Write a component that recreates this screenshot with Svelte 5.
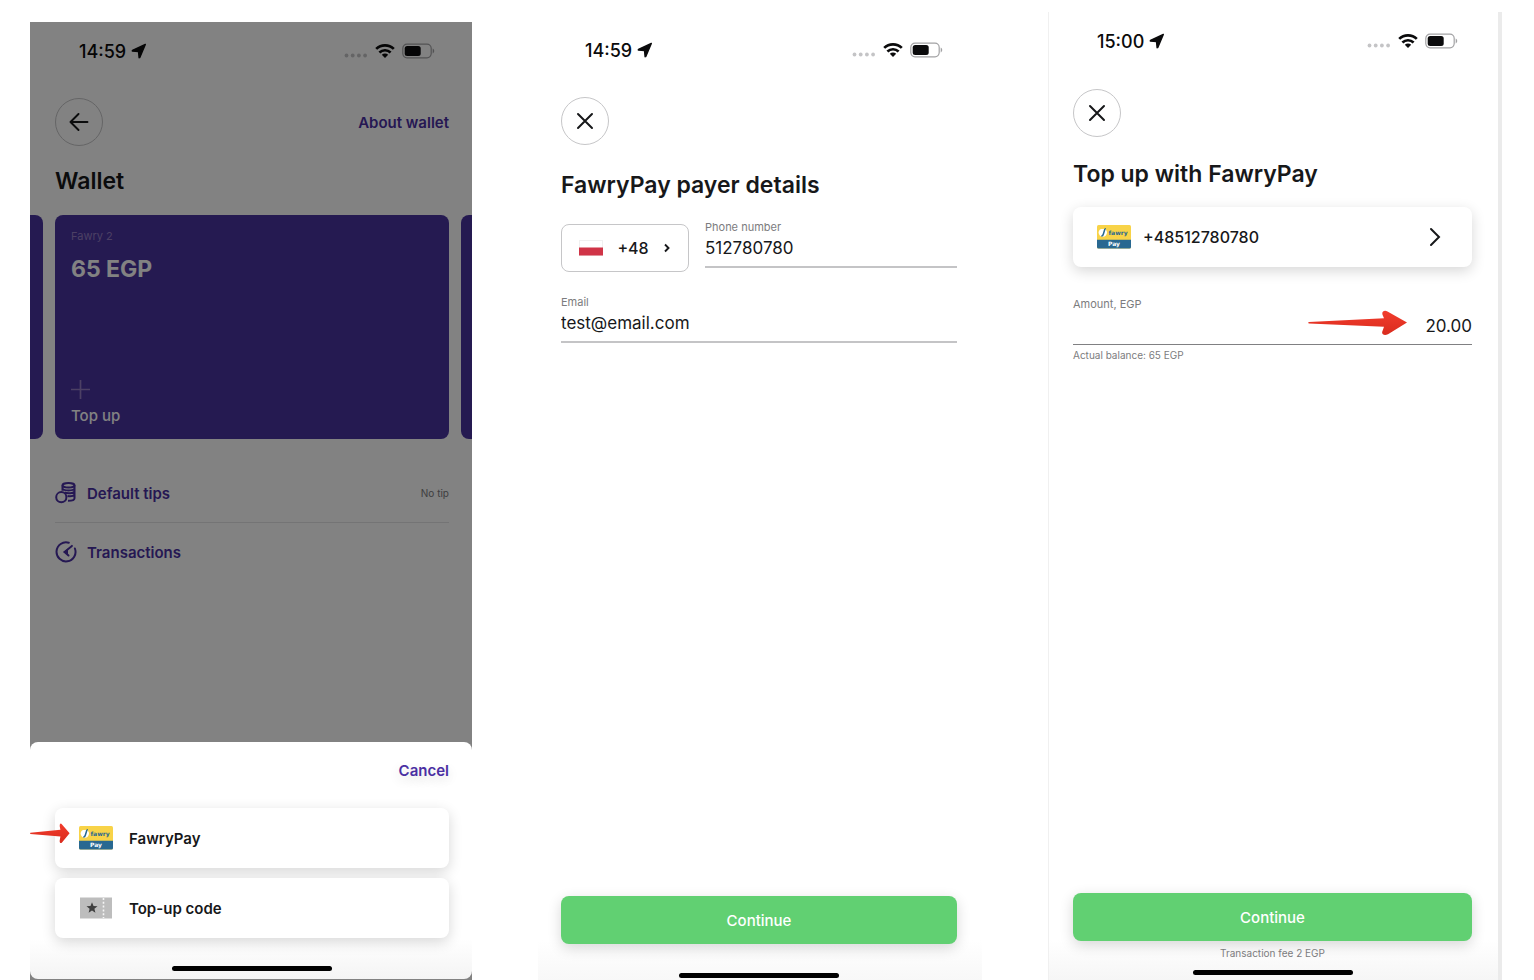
<script lang="ts">
  let phone = $state('512780780')
  let email = $state('test@email.com')
  let amount = $state('20.00')
</script>

{#snippet statusBar(time: string)}
  <div class="status">
    <span class="time">{time}</span>
    <svg class="location" width="16" height="16" viewBox="0 0 16 16" aria-hidden="true">
      <path d="M14.300 1.500 1.500 7.300l-.2.700 6.200.5.600 6.200.7-.2Z" fill="currentColor" stroke="currentColor" stroke-width="1.400" stroke-linejoin="round" />
    </svg>
    <svg class="dots" width="24" height="18" viewBox="0 0 24 18" aria-hidden="true">
      {#each [2.5, 8.7, 14.9, 21.1] as cx}
        <circle {cx} cy="13.500" r="1.900" fill="#c4c4c6" />
      {/each}
    </svg>
    <svg width="20" height="16" viewBox="0 0 20 16" aria-hidden="true">
      <g fill="none" stroke="currentColor" stroke-width="2.700">
        <path d="M1.200 5.900C6 1.200 14 1.200 18.800 5.900" />
        <path d="M4.400 9.500c3.200-3 8-3 11.200 0" />
      </g>
      <path d="m10 14.900-3.200-3.100c1.800-1.600 4.600-1.600 6.400 0Z" fill="currentColor" />
    </svg>
    <svg class="battery" width="33" height="16" viewBox="0 0 33 16" aria-hidden="true">
      <rect x=".8" y="1.200" width="28.400" height="13.600" rx="4.200" fill="none" stroke="#a2a2a4" stroke-width="1.200" />
      <rect x="2.700" y="3.100" width="16" height="9.800" rx="2.500" fill="currentColor" />
      <path d="M30.700 5.600c2 .7 2 4.100 0 4.800Z" fill="#a2a2a4" />
    </svg>
  </div>
{/snippet}

{#snippet closeIcon()}
  <svg width="18" height="18" viewBox="0 0 18 18" aria-hidden="true">
    <path d="m2 2 14 14M16 2 2 16" fill="none" stroke="currentColor" stroke-width="2" stroke-linecap="round" />
  </svg>
{/snippet}

{#snippet fawryLogo()}
  <svg class="logo" width="34" height="24" viewBox="0 0 34 24" aria-hidden="true">
    <rect width="34" height="23.500" rx="1.500" fill="#f8d348" />
    <path d="M0 14.800h34V22a1.500 1.500 0 0 1-1.500 1.500h-31A1.500 1.500 0 0 1 0 22Z" fill="#286891" />
    <circle cx="5.800" cy="7.600" r="4.200" fill="#fff" />
    <path d="M8.300 2.800 6.300 9.300c-.3 1.200-.9 1.700-2 1.600" fill="none" stroke="#286891" stroke-width="1.500" />
    <path d="M3.600 3.300c2 .4 3.600 0 5.500-1.300" fill="none" stroke="#f8d348" stroke-width="1.200" />
    <text x="11.500" y="9.500" class="logo-name">fawry</text>
    <text x="17" y="21" text-anchor="middle" class="logo-pay">Pay</text>
  </svg>
{/snippet}

{#snippet redArrow()}
  <svg class="pointer" viewBox="0 0 100 28" preserveAspectRatio="none" aria-hidden="true">
    <defs>
      <linearGradient id="arrow-fill" x1="0" y1="0" x2="0" y2="1">
        <stop offset="0" stop-color="#f23c2c" />
        <stop offset="1" stop-color="#d92c1e" />
      </linearGradient>
    </defs>
    <path d="M1 13 76 9l-1.500-4c-1-3.500 2-5.500 5-3.500L99 13.500 80 26c-4 2.200-7-.3-5.500-3.500L76 18 1 14.500c-1 0-1-1.400 0-1.500Z" fill="url(#arrow-fill)" />
  </svg>
{/snippet}

<main>
  <section class="screen wallet">
    {@render statusBar('14:59')}
    <header>
      <button class="round" aria-label="Back">
        <svg width="20" height="18" viewBox="0 0 20 18" aria-hidden="true">
          <path d="M18.500 9H1.500M9.500 1 1.500 9l8 8" fill="none" stroke="currentColor" stroke-width="1.900" stroke-linecap="round" stroke-linejoin="round" />
        </svg>
      </button>
      <a href="#about">About wallet</a>
    </header>
    <h1>Wallet</h1>

    <div class="carousel">
      <div class="peek left"></div>
      <article class="account">
        <span class="account-name">Fawry 2</span>
        <strong>65 EGP</strong>
        <button class="top-up">
          <svg width="19" height="19" viewBox="0 0 19 19" aria-hidden="true">
            <path d="M9.500 0v19M0 9.500h19" stroke="#957fc4" stroke-width="1.700" />
          </svg>
          Top up
        </button>
      </article>
      <div class="peek right"></div>
    </div>

    <nav>
      <a href="#tips">
        <svg width="22" height="22" viewBox="0 0 22 22" aria-hidden="true">
          <g fill="none" stroke="currentColor" stroke-width="2">
            <ellipse cx="13.500" cy="3.300" rx="6" ry="2.200" />
            <path d="M7.500 3.300v5.500M19.500 3.300v13c0 1.500-2.500 2.500-6.500 2.500M7.500 6.500c1 2.500 11 2.500 12 0M9.500 10.300c3 1.500 9 1 10-.7M12.500 14c3 .5 6 0 7-1.400" />
            <circle cx="6.300" cy="15.200" r="5.100" />
          </g>
        </svg>
        Default tips
        <small>No tip</small>
      </a>
      <a href="#transactions">
        <svg width="22" height="22" viewBox="0 0 22 22" aria-hidden="true">
          <g fill="none" stroke="currentColor" stroke-width="2" stroke-linecap="round">
            <path d="M13.800 1.800A9.500 9.500 0 1 0 19.900 7.500" />
            <path d="M16.900 4.900 9.500 11l4 3.500" />
          </g>
          <path d="m8.500 11 4.500-3.500v6.500Z" fill="currentColor" />
        </svg>
        Transactions
      </a>
    </nav>

    <div class="backdrop"></div>
    <div class="sheet" role="dialog" aria-label="Top up method">
      <button class="cancel">Cancel</button>
      <div class="method">
        <button class="card">
          {@render fawryLogo()}
          FawryPay
        </button>
        {@render redArrow()}
      </div>
      <div class="method">
        <button class="card">
          <svg class="logo" width="34" height="22" viewBox="0 0 34 22" aria-hidden="true">
            <rect x="1" y=".5" width="32" height="21" fill="#bdbdbd" />
            <path d="M24.500 1v20" stroke="#f5f5f5" stroke-width="1.600" stroke-dasharray="2 1.800" />
            <path d="m13 5.300 1.500 3.700 4 .3-3.100 2.500 1 3.900-3.400-2.100-3.400 2.100 1-3.900-3.100-2.500 4-.3Z" fill="#3f3f3f" />
          </svg>
          Top-up code
        </button>
      </div>
      <div class="home"></div>
    </div>
  </section>

  <section class="screen payer">
    {@render statusBar('14:59')}
    <header>
      <button class="round" aria-label="Close">{@render closeIcon()}</button>
    </header>
    <h1>FawryPay payer details</h1>

    <div class="phone-row">
      <button class="country" aria-label="Country code +48">
        <svg width="24" height="16" viewBox="0 0 24 16" aria-hidden="true">
          <rect x=".5" y=".5" width="23" height="15" fill="#fff" stroke="#f0f0f0" />
          <rect y="7.500" width="24" height="8" fill="#d03447" />
        </svg>
        +48
        <svg width="8" height="10" viewBox="0 0 8 10" aria-hidden="true">
          <path d="m2 1.500 3.500 3.500L2 8.500" fill="none" stroke="currentColor" stroke-width="1.900" />
        </svg>
      </button>
      <div class="field">
        <label for="phone">Phone number</label>
        <input id="phone" type="tel" bind:value={phone} />
      </div>
    </div>
    <div class="field">
      <label for="email">Email</label>
      <input id="email" type="email" bind:value={email} />
    </div>

    <footer>
      <button class="continue">Continue</button>
      <div class="home"></div>
    </footer>
  </section>

  <section class="screen amount">
    {@render statusBar('15:00')}
    <header>
      <button class="round" aria-label="Close">{@render closeIcon()}</button>
    </header>
    <h1>Top up with FawryPay</h1>

    <button class="card account-card">
      {@render fawryLogo()}
      +48512780780
      <svg class="chevron" width="12" height="20" viewBox="0 0 12 20" aria-hidden="true">
        <path d="m2 2 8 8-8 8" fill="none" stroke="currentColor" stroke-width="2" stroke-linecap="round" />
      </svg>
    </button>
    <div class="field">
      <label for="amount">Amount, EGP</label>
      <input id="amount" inputmode="decimal" bind:value={amount} />
      {@render redArrow()}
      <span class="hint">Actual balance: 65 EGP</span>
    </div>

    <footer>
      <button class="continue">Continue</button>
      <span class="fee">Transaction fee 2 EGP</span>
      <div class="home"></div>
    </footer>
  </section>
</main>

<style>
  :global(body) {
    margin: 0;
    background: #fff;
  }
  main {
    --purple: #4a2fa3;
    --ink: #17181a;
    --muted: #7c7c7e;
    display: grid;
    grid-template-columns: 442fr 444fr 454fr;
    gap: 66px;
    min-height: 100vh;
    padding: 0 32px 0 30px;
    box-sizing: border-box;
    font-family: Inter, 'Liberation Sans', sans-serif;
    color: var(--ink);
  }
  button,
  input {
    font: inherit;
    color: inherit;
    margin: 0;
    padding: 0;
    border: 0;
    background: none;
  }
  button {
    cursor: pointer;
  }
  a {
    color: var(--purple);
    text-decoration: none;
  }
  svg {
    display: block;
    flex-shrink: 0;
  }
  .screen {
    position: relative;
    display: flex;
    flex-direction: column;
    box-sizing: border-box;
    min-width: 0;
  }
  .wallet {
    margin-top: 22px;
    padding: 0 23px 0 25px;
    overflow: hidden;
  }
  .payer {
    margin-top: 21px;
    padding: 0 25px 0 23px;
    background: linear-gradient(to top, #f8f8f8, #fff 40px);
  }
  .amount {
    margin-top: 12px;
    padding: 0 26px 0 24px;
    border-left: 1px solid #f0f0f0;
    border-right: 4px solid #ebebeb;
    background: linear-gradient(to top, #f6f6f6, #fff 40px);
  }

  /* status bar */
  .status {
    display: flex;
    align-items: center;
    height: 58px;
    padding: 0 14px 0 24px;
    color: #0b0b0c;
  }
  .time {
    font-size: 18px;
    font-weight: 500;
  }
  .location {
    margin-left: 5px;
  }
  .dots {
    margin-left: auto;
    margin-right: 7px;
  }
  .battery {
    margin-left: 7px;
  }

  header {
    display: flex;
    align-items: center;
    justify-content: space-between;
    margin-top: 18px;
    font-size: 15px;
    font-weight: 600;
  }
  .amount header {
    margin-top: 19px;
  }
  .round {
    display: flex;
    align-items: center;
    justify-content: center;
    width: 48px;
    height: 48px;
    box-sizing: border-box;
    border: 1px solid #c6c6c8;
    border-radius: 50%;
  }
  h1 {
    margin: 24px 0 19px;
    font-size: 23px;
    line-height: 32px;
    font-weight: 600;
  }
  .wallet h1 {
    margin: 19px 0 18px;
  }
  .amount h1 {
    margin: 21px 0 17px;
  }

  /* wallet */
  .carousel {
    display: flex;
    gap: 12px;
    margin: 0 -23px 0 -25px;
    height: 224px;
  }
  .peek {
    background: #4933a0;
  }
  .peek.left {
    width: 13px;
    border-radius: 0 8px 8px 0;
  }
  .peek.right {
    width: 11px;
    border-radius: 8px 0 0 8px;
  }
  .account {
    flex: 1;
    display: flex;
    flex-direction: column;
    align-items: flex-start;
    padding: 14px 16px 13px;
    border-radius: 8px;
    background: #4933a0;
    color: #fff;
  }
  .account-name {
    font-size: 11px;
    line-height: 14px;
    color: #957fc4;
  }
  .account strong {
    margin-top: 10px;
    font-size: 23px;
    line-height: 32px;
    font-weight: 700;
  }
  .top-up {
    display: flex;
    flex-direction: column;
    align-items: flex-start;
    gap: 7px;
    margin-top: auto;
    font-size: 15px;
    line-height: 20px;
    font-weight: 500;
  }
  nav {
    margin-top: 25px;
  }
  nav a {
    display: flex;
    align-items: center;
    gap: 10px;
    height: 58px;
    font-size: 15px;
    font-weight: 600;
  }
  nav a + a {
    border-top: 1px solid #e4e4e6;
  }
  small {
    margin-left: auto;
    font-size: 10px;
    font-weight: 400;
    color: var(--muted);
  }
  .backdrop {
    position: absolute;
    inset: 0;
    background: rgba(0, 0, 0, 0.49);
  }
  .sheet {
    position: relative;
    display: flex;
    flex-direction: column;
    margin: auto -23px 1px -25px;
    padding: 18px 23px 8px 25px;
    border-radius: 8px;
    background: linear-gradient(to top, #f4f4f4, #fff 40px);
  }
  .cancel {
    align-self: flex-end;
    margin-bottom: 26px;
    font-size: 15px;
    line-height: 22px;
    font-weight: 600;
    color: var(--purple);
    text-shadow: 0 4px 12px rgba(0, 0, 0, 0.16);
  }
  .method {
    position: relative;
    margin-bottom: 10px;
  }
  .card {
    display: flex;
    align-items: center;
    width: 100%;
    height: 60px;
    padding: 0 24px;
    border-radius: 8px;
    background: #fff;
    box-shadow: 0 4px 14px rgba(0, 0, 0, 0.16);
    font-size: 15px;
    font-weight: 600;
    text-align: left;
  }
  .card .logo {
    margin-right: 16px;
  }
  .logo-name,
  .logo-pay {
    font-family: 'DejaVu Sans', sans-serif;
    font-size: 6px;
    font-weight: 700;
    fill: #286891;
  }
  .logo-pay {
    fill: #fff;
  }
  .pointer {
    position: absolute;
  }
  .method .pointer {
    left: -25px;
    top: 15px;
    width: 40px;
    height: 21px;
  }
  .home {
    align-self: center;
    width: 160px;
    height: 5px;
    border-radius: 3px;
    background: #000;
  }
  .sheet .home {
    margin-top: 18px;
  }

  /* payer details */
  .phone-row {
    display: flex;
    gap: 16px;
    margin-bottom: 23px;
  }
  .country {
    display: flex;
    align-items: center;
    justify-content: center;
    gap: 14px;
    width: 128px;
    height: 48px;
    margin-top: 4px;
    box-sizing: border-box;
    border: 1px solid #c6c6c8;
    border-radius: 8px;
    font-size: 16px;
    font-weight: 500;
  }
  .field {
    position: relative;
    display: flex;
    flex-direction: column;
  }
  .phone-row .field {
    flex: 1;
    min-width: 0;
  }
  label,
  .hint,
  .fee {
    font-size: 11px;
    line-height: 14px;
    color: var(--muted);
  }
  .hint,
  .fee {
    font-size: 10px;
  }
  .field input {
    width: 100%;
    height: 34px;
    padding-bottom: 4px;
    box-sizing: border-box;
    border-bottom: 2px solid #c4c4c6;
    border-radius: 0;
    font-size: 17px;
    outline: none;
  }

  /* amount */
  .account-card {
    margin-bottom: 30px;
    font-size: 16px;
    font-weight: 500;
  }
  .account-card .logo {
    margin-right: 12px;
  }
  .chevron {
    margin-left: auto;
    margin-right: 7px;
  }
  .amount .field input {
    border-bottom: 1px solid #808082;
    text-align: right;
  }
  .amount .pointer {
    right: 64px;
    top: 13px;
    width: 100px;
    height: 26px;
  }
  .hint {
    margin-top: 3px;
  }
  footer {
    display: flex;
    flex-direction: column;
    margin-top: auto;
  }
  .continue {
    height: 48px;
    border-radius: 8px;
    background: #61d072;
    box-shadow: 0 4px 14px rgba(0, 0, 0, 0.16);
    color: #fff;
    font-size: 15px;
    font-weight: 500;
  }
  .fee {
    margin-top: 5px;
    text-align: center;
  }
  .payer .home {
    margin: 29px 0 2px;
  }
  .amount .home {
    margin: 10px 0 5px;
  }
</style>
